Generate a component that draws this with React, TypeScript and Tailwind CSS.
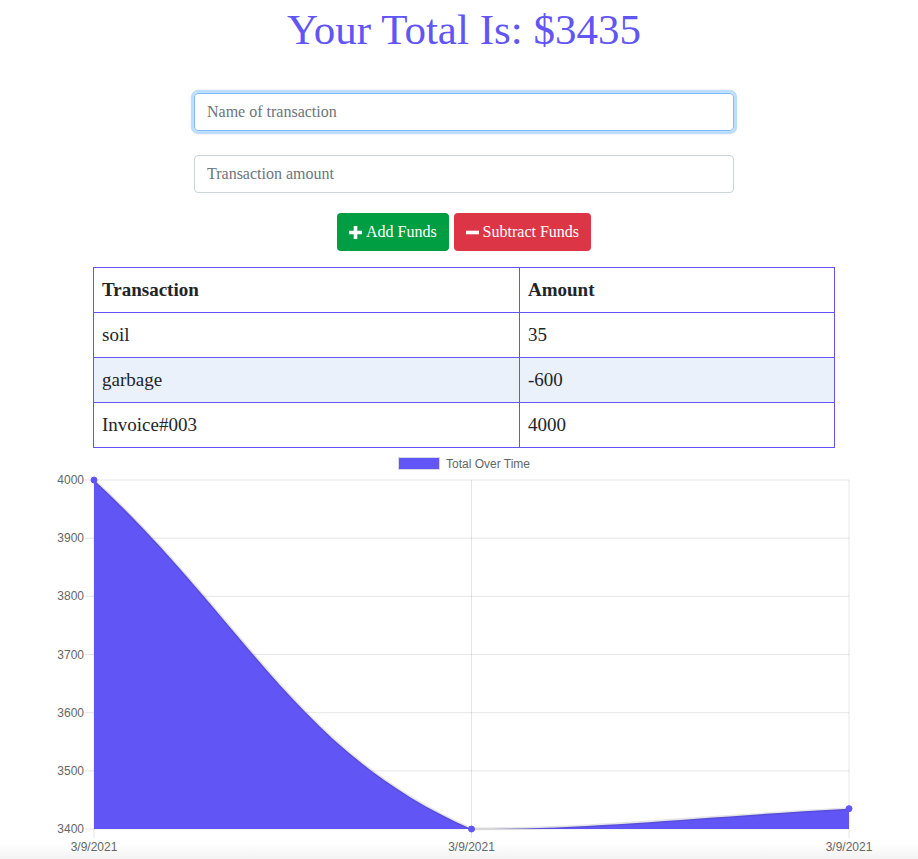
const rows = [
  { name: 'soil', amount: '35' },
  { name: 'garbage', amount: '-600' },
  { name: 'Invoice#003', amount: '4000' },
];

const yTicks = [4000, 3900, 3800, 3700, 3600, 3500, 3400];
const top = 480;
const bottom = 829;
const left = 94;
const right = 849;
const yFor = (v: number) => bottom - ((v - 3400) / 600) * (bottom - top);

const PlusIcon = () => (
  <svg width="13" height="13" viewBox="0 0 13 13" className="inline-block">
    <path d="M4.7 0h3.6v4.7H13v3.6H8.3V13H4.7V8.3H0V4.7h4.7z" fill="white" />
  </svg>
);

const MinusIcon = () => (
  <svg width="13" height="13" viewBox="0 0 13 13" className="inline-block">
    <rect x="0" y="4.7" width="13" height="3.6" fill="white" />
  </svg>
);

const Chart = () => {
  const mid = (left + right) / 2;
  const p2 = yFor(3435);

  return (
    <svg width="918" height="411" viewBox="0 448 918 411" className="block">
      {/* legend */}
      <rect x="398.5" y="457.5" width="41" height="12" fill="#6155f5" stroke="#d9d9e6" strokeWidth="1" />
      <text x="446" y="468" fontSize="12" fill="#666" fontFamily="'Liberation Sans', Arial, sans-serif">
        Total Over Time
      </text>

      {/* horizontal grid + y labels */}
      {yTicks.map((t) => (
        <g key={t}>
          <line x1="85" x2={right} y1={yFor(t)} y2={yFor(t)} stroke="rgba(0,0,0,0.1)" />
          <text
            x="84"
            y={yFor(t) + 4}
            textAnchor="end"
            fontSize="12"
            fill="#666"
            fontFamily="'Liberation Sans', Arial, sans-serif"
          >
            {t}
          </text>
        </g>
      ))}

      {/* vertical grid + x labels */}
      {[left, mid, right].map((x) => (
        <g key={x}>
          <line x1={x} x2={x} y1={top} y2="838" stroke="rgba(0,0,0,0.1)" />
          <text
            x={x}
            y="851"
            textAnchor="middle"
            fontSize="12"
            fill="#666"
            fontFamily="'Liberation Sans', Arial, sans-serif"
          >
            3/9/2021
          </text>
        </g>
      ))}

      {/* area */}
      <path
        d={`M${left},${top} C245,619.6 297.5,753.3 ${mid},${bottom} C599.5,${bottom} 698,816.8 ${right},${p2} L${right},${bottom} L${left},${bottom} Z`}
        fill="#6155f5"
      />
      <path
        d={`M${left},${top} C245,619.6 297.5,753.3 ${mid},${bottom} C599.5,${bottom} 698,816.8 ${right},${p2}`}
        fill="none"
        stroke="rgba(0,0,0,0.1)"
        strokeWidth="3"
      />
      {[
        [left, top],
        [mid, bottom],
        [right, p2],
      ].map(([x, y]) => (
        <circle key={x} cx={x} cy={y} r="3" fill="#6155f5" stroke="#6155f5" />
      ))}
    </svg>
  );
};

export default function App() {
  return (
    <div
      className="w-[918px] h-[859px] overflow-hidden bg-[linear-gradient(to_bottom,#ffffff_843px,#f3f3f3_859px)] text-[#212529]"
      style={{ fontFamily: "'Liberation Serif', 'Times New Roman', serif" }}
    >
      <div className="flex flex-col items-center pl-[10px]">
        <h1 className="text-[43px] leading-[60px] font-normal text-[#6155f5]">Your Total Is: $3435</h1>

        <input
          type="text"
          placeholder="Name of transaction"
          className="mt-[33px] w-[540px] h-[38px] px-3 text-base rounded border border-[#80bdff] shadow-[0_0_0_3.2px_rgba(0,123,255,0.25)] outline-none placeholder:text-[#6c757d]"
        />
        <input
          type="number"
          placeholder="Transaction amount"
          className="mt-[24px] w-[540px] h-[38px] px-3 text-base rounded border border-[#ced4da] outline-none placeholder:text-[#6c757d]"
        />

        <div className="mt-[20px] flex gap-[5px]">
          <button className="h-[38px] px-3 rounded bg-[#009e43] text-white text-base flex items-center gap-1">
            <PlusIcon /> Add Funds
          </button>
          <button className="h-[38px] px-3 rounded bg-[#dc3545] text-white text-base flex items-center gap-1">
            <MinusIcon /> Subtract Funds
          </button>
        </div>

        <table className="mt-[16px] w-[742px] border-collapse text-[19px]">
          <thead>
            <tr className="h-[45px]">
              <th className="w-[426px] border border-[#6155f5] px-[8px] text-left font-bold">Transaction</th>
              <th className="border border-[#6155f5] px-[8px] text-left font-bold">Amount</th>
            </tr>
          </thead>
          <tbody>
            {rows.map((r, i) => (
              <tr key={r.name} className={`h-[45px] ${i === 1 ? 'bg-[#ebf1fb]' : ''}`}>
                <td className="border border-[#6155f5] px-[8px]">{r.name}</td>
                <td className="border border-[#6155f5] px-[8px]">{r.amount}</td>
              </tr>
            ))}
          </tbody>
        </table>
      </div>

      <Chart />
    </div>
  );
}
